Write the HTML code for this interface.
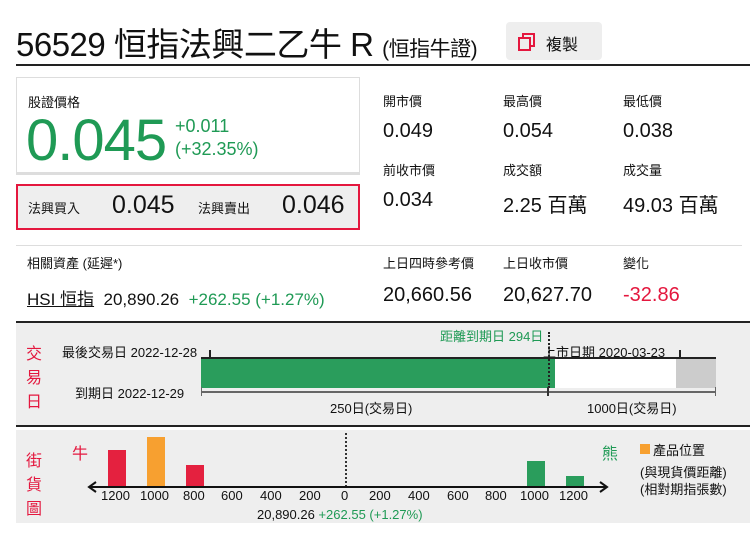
<!DOCTYPE html>
<html><head><meta charset="utf-8"><style>
body{margin:0;width:750px;height:533px;background:#fff;font-family:"Liberation Sans","Noto Sans CJK TC",sans-serif;color:#111;position:relative;overflow:hidden}
.a{position:absolute;white-space:nowrap}
.g{color:#1f9a55}.r{color:#e4173e}
.lbl{font-size:13px}
.val{font-size:20px}
</style></head><body>
<div class="a" style="left:16px;top:18px;font-size:33px;letter-spacing:-0.5px">56529 恒指法興二乙牛 R <span style="font-size:21px">(恒指牛證)</span></div>
<div class="a" style="left:506px;top:22px;width:96px;height:38px;background:#eee;border-radius:4px"></div>
<svg class="a" style="left:516px;top:31px" width="22" height="22" viewBox="0 0 22 22"><rect x="7" y="3" width="11" height="12" fill="none" stroke="#e4173e" stroke-width="2"/><rect x="3" y="7" width="11" height="12" fill="#eee" stroke="#e4173e" stroke-width="2"/></svg>
<div class="a" style="left:546px;top:31px;font-size:16px">複製</div>
<div class="a" style="left:16px;top:64px;width:734px;height:2px;background:#222"></div>

<div class="a" style="left:16px;top:77px;width:342px;height:94px;border:1px solid #ddd;border-bottom:3px solid #ddd"></div>
<div class="a lbl" style="left:28px;top:92px">股證價格</div>
<div class="a g" style="left:26px;top:107px;font-size:58px;letter-spacing:-1px">0.045</div>
<div class="a g" style="left:175px;top:116px;font-size:18px">+0.011</div>
<div class="a g" style="left:175px;top:139px;font-size:18px">(+32.35%)</div>
<div class="a" style="left:16px;top:184px;width:340px;height:42px;border:2px solid #e4173e;background:#eee"></div>
<div class="a lbl" style="left:28px;top:198px">法興買入</div>
<div class="a" style="left:112px;top:191px;font-size:25px">0.045</div>
<div class="a lbl" style="left:198px;top:198px">法興賣出</div>
<div class="a" style="left:282px;top:191px;font-size:25px">0.046</div>

<div class="a lbl" style="left:383px;top:91px">開市價</div>
<div class="a lbl" style="left:503px;top:91px">最高價</div>
<div class="a lbl" style="left:623px;top:91px">最低價</div>
<div class="a val" style="left:383px;top:120px">0.049</div>
<div class="a val" style="left:503px;top:120px">0.054</div>
<div class="a val" style="left:623px;top:120px">0.038</div>
<div class="a lbl" style="left:383px;top:160px">前收市價</div>
<div class="a lbl" style="left:503px;top:160px">成交額</div>
<div class="a lbl" style="left:623px;top:160px">成交量</div>
<div class="a val" style="left:383px;top:189px">0.034</div>
<div class="a val" style="left:503px;top:189px">2.25 百萬</div>
<div class="a val" style="left:623px;top:189px">49.03 百萬</div>

<div class="a" style="left:16px;top:245px;width:726px;height:1px;background:#ddd"></div>
<div class="a lbl" style="left:27px;top:253px">相關資產 (延遲*)</div>
<div class="a lbl" style="left:383px;top:253px">上日四時參考價</div>
<div class="a lbl" style="left:503px;top:253px">上日收市價</div>
<div class="a lbl" style="left:623px;top:253px">變化</div>
<div class="a" style="left:27px;top:285px;font-size:17px"><span style="text-decoration:underline">HSI 恒指</span>&nbsp; 20,890.26 &nbsp;<span class="g">+262.55 (+1.27%)</span></div>
<div class="a val" style="left:383px;top:284px">20,660.56</div>
<div class="a val" style="left:503px;top:284px">20,627.70</div>
<div class="a val r" style="left:623px;top:284px">-32.86</div>

<div class="a" style="left:16px;top:321px;width:734px;height:102px;background:#eee;border-top:2px solid #222;border-bottom:2px solid #222"></div>
<div class="a r" style="left:26px;top:343px;font-size:16px;line-height:24px;white-space:normal;width:18px">交<br>易<br>日</div>
<div class="a lbl" style="left:62px;top:342px">最後交易日 2022-12-28</div>
<div class="a lbl" style="left:75px;top:383px">到期日 2022-12-29</div>
<div class="a g lbl" style="left:440px;top:326px">距離到期日 294日</div>
<div class="a lbl" style="left:543px;top:342px">上市日期 2020-03-23</div>
<div class="a" style="left:201px;top:358px;width:354px;height:30px;background:#2a9d5c"></div>
<div class="a" style="left:555px;top:358px;width:121px;height:30px;background:#fff"></div>
<div class="a" style="left:676px;top:358px;width:40px;height:30px;background:#ccc"></div>
<div class="a" style="left:201px;top:357px;width:515px;height:2px;background:#222"></div>
<div class="a" style="left:209px;top:350px;width:2px;height:8px;background:#222"></div>
<div class="a" style="left:679px;top:350px;width:2px;height:8px;background:#222"></div>
<div class="a" style="left:548px;top:332px;height:56px;border-left:2px dotted #222"></div>
<div class="a" style="left:201px;top:391px;width:515px;height:2px;background:#666"></div>
<div class="a" style="left:201px;top:387px;width:1px;height:9px;background:#666"></div>
<div class="a" style="left:547px;top:387px;width:2px;height:9px;background:#333"></div>
<div class="a" style="left:715px;top:387px;width:1px;height:9px;background:#666"></div>
<div class="a lbl" style="left:330px;top:398px">250日(交易日)</div>
<div class="a lbl" style="left:587px;top:398px">1000日(交易日)</div>

<div class="a" style="left:16px;top:430px;width:734px;height:93px;background:#eee"></div>
<div class="a r" style="left:26px;top:450px;font-size:16px;line-height:24px;white-space:normal;width:18px">街<br>貨<br>圖</div>
<div class="a r" style="left:72px;top:440px;font-size:16px">牛</div>
<div class="a g" style="left:602px;top:440px;font-size:16px">熊</div>
<div class="a" style="left:640px;top:444px;width:10px;height:10px;background:#f7a030"></div>
<div class="a lbl" style="left:653px;top:440px">產品位置</div>
<div class="a lbl" style="left:640px;top:464px;line-height:17px">(與現貨價距離)<br>(相對期指張數)</div>
<div class="a" style="left:108px;top:450px;width:18px;height:37px;background:#e4213f"></div>
<div class="a" style="left:147px;top:437px;width:18px;height:50px;background:#f7a030"></div>
<div class="a" style="left:186px;top:465px;width:18px;height:22px;background:#e4213f"></div>
<div class="a" style="left:527px;top:461px;width:18px;height:26px;background:#2a9d5c"></div>
<div class="a" style="left:566px;top:476px;width:18px;height:11px;background:#2a9d5c"></div>
<div class="a" style="left:345px;top:433px;height:54px;border-left:2px dotted #333"></div>
<svg class="a" style="left:86px;top:480px" width="524" height="14"><line x1="3" y1="7" x2="521" y2="7" stroke="#111" stroke-width="2"/><polyline points="10,2 3,7 10,12" fill="none" stroke="#111" stroke-width="2"/><polyline points="514,2 521,7 514,12" fill="none" stroke="#111" stroke-width="2"/></svg>
<div class="a lbl" style="left:101px;top:488px">1200</div>
<div class="a lbl" style="left:140px;top:488px">1000</div>
<div class="a lbl" style="left:183px;top:488px">800</div>
<div class="a lbl" style="left:221px;top:488px">600</div>
<div class="a lbl" style="left:260px;top:488px">400</div>
<div class="a lbl" style="left:299px;top:488px">200</div>
<div class="a lbl" style="left:341px;top:488px">0</div>
<div class="a lbl" style="left:369px;top:488px">200</div>
<div class="a lbl" style="left:408px;top:488px">400</div>
<div class="a lbl" style="left:447px;top:488px">600</div>
<div class="a lbl" style="left:485px;top:488px">800</div>
<div class="a lbl" style="left:520px;top:488px">1000</div>
<div class="a lbl" style="left:559px;top:488px">1200</div>
<div class="a lbl" style="left:257px;top:507px">20,890.26 <span class="g">+262.55 (+1.27%)</span></div>
</body></html>
